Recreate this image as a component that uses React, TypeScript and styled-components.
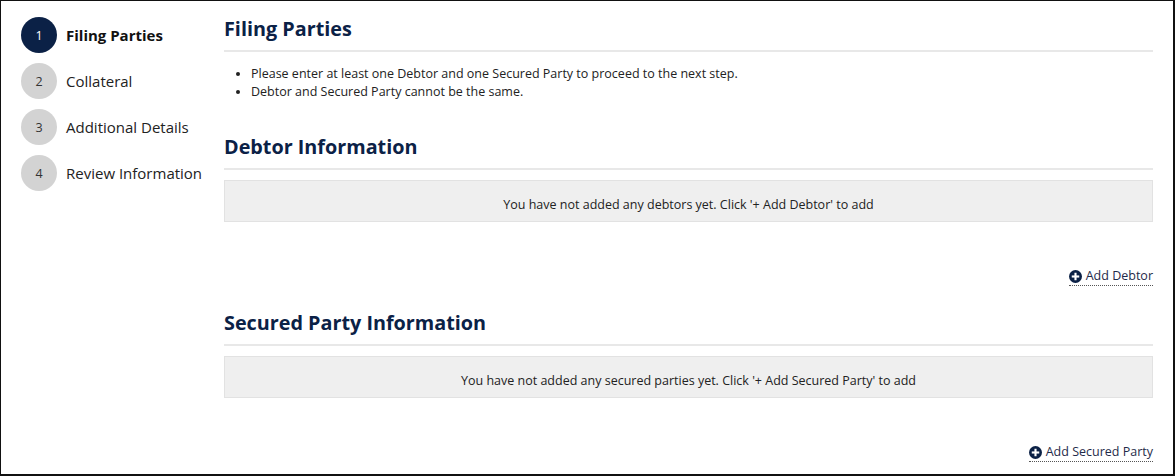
import React from "react";
import styled, { createGlobalStyle } from "styled-components";

const GlobalStyle = createGlobalStyle`
  html, body {
    margin: 0;
    padding: 0;
    background: #fff;
  }
  body {
    font-family: "Open Sans", "Liberation Sans", sans-serif;
    color: #222;
  }
`;

type StepData = { label: string; active?: boolean };

const steps: StepData[] = [
  { label: "Filing Parties", active: true },
  { label: "Collateral" },
  { label: "Additional Details" },
  { label: "Review Information" },
];

const navy = "#0b2146";

function PlusCircle() {
  return (
    <svg width="13" height="13" viewBox="0 0 16 16" aria-hidden="true">
      <circle cx="8" cy="8" r="8" fill={navy} />
      <rect x="6.7" y="3.4" width="2.6" height="9.2" fill="#fff" />
      <rect x="3.4" y="6.7" width="9.2" height="2.6" fill="#fff" />
    </svg>
  );
}

function Section({
  title,
  emptyText,
  action,
}: {
  title: string;
  emptyText: string;
  action: string;
}) {
  return (
    <>
      <Heading>{title}</Heading>
      <EmptyBox>{emptyText}</EmptyBox>
      <ActionRow>
        <AddLink href="#">
          <PlusCircle />
          {action}
        </AddLink>
      </ActionRow>
    </>
  );
}

export default function App() {
  return (
    <>
      <GlobalStyle />
      <Frame>
        <Sidebar>
          {steps.map((s, i) => (
            <Step key={s.label}>
              <StepCircle active={s.active}>{i + 1}</StepCircle>
              <StepLabel active={s.active}>{s.label}</StepLabel>
            </Step>
          ))}
        </Sidebar>
        <Main>
          <PageHeading>Filing Parties</PageHeading>
          <Notes>
            <li>Please enter at least one Debtor and one Secured Party to proceed to the next step.</li>
            <li>Debtor and Secured Party cannot be the same.</li>
          </Notes>
          <Section
            title="Debtor Information"
            emptyText="You have not added any debtors yet. Click '+ Add Debtor' to add"
            action="Add Debtor"
          />
          <Section
            title="Secured Party Information"
            emptyText="You have not added any secured parties yet. Click '+ Add Secured Party' to add"
            action="Add Secured Party"
          />
        </Main>
      </Frame>
    </>
  );
}

const Frame = styled.div`
  box-sizing: border-box;
  width: 1175px;
  height: 476px;
  border: 1px solid #111;
  border-right-width: 2px;
  border-bottom-width: 2px;
  display: flex;
  align-items: flex-start;
  overflow: hidden;
`;

const Sidebar = styled.nav`
  width: 203px;
  flex-shrink: 0;
  padding: 16px 0 0 20px;
  display: flex;
  flex-direction: column;
  gap: 10px;
`;

const Step = styled.div`
  display: flex;
  align-items: center;
  gap: 9px;
  height: 36px;
`;

const StepCircle = styled.span<{ active?: boolean }>`
  width: 36px;
  height: 36px;
  border-radius: 50%;
  flex-shrink: 0;
  display: flex;
  align-items: center;
  justify-content: center;
  font-size: 12.5px;
  background: ${(p) => (p.active ? navy : "#d3d3d3")};
  color: ${(p) => (p.active ? "#fff" : "#333")};
`;

const StepLabel = styled.span<{ active?: boolean }>`
  font-size: 15px;
  white-space: nowrap;
  font-weight: ${(p) => (p.active ? 700 : 400)};
  color: ${(p) => (p.active ? "#111" : "#222")};
`;

const Main = styled.main`
  flex: 1;
  min-width: 0;
  padding: 0 20px 0 0;
`;

const Heading = styled.h2`
  margin: 24px 0 0;
  font-size: 19.8px;
  line-height: 26px;
  font-weight: 700;
  color: ${navy};
  padding: 0 0 8px;
  border-bottom: 2px solid #e8e8e8;
`;

const PageHeading = styled(Heading)`
  margin-top: 15px;
`;

const Notes = styled.ul`
  margin: 13px 0 33px;
  padding-left: 27px;
  font-size: 12.5px;
  line-height: 18px;
  color: #222;
  li {
    height: 18px;
  }
  li::marker {
    font-size: 11px;
  }
`;

const EmptyBox = styled.div`
  margin-top: 10px;
  height: 42px;
  box-sizing: border-box;
  background: #efefef;
  border: 1px solid #e2e2e2;
  display: flex;
  align-items: center;
  justify-content: center;
  font-size: 12.5px;
  color: #222;
  padding-top: 6px;
`;

const ActionRow = styled.div`
  display: flex;
  justify-content: flex-end;
  margin-top: 45px;
`;

const AddLink = styled.a`
  display: inline-flex;
  align-items: center;
  gap: 4px;
  font-size: 12.5px;
  line-height: 18px;
  color: #1f2b4a;
  text-decoration: none;
  border-bottom: 1px dotted #555;
`;
